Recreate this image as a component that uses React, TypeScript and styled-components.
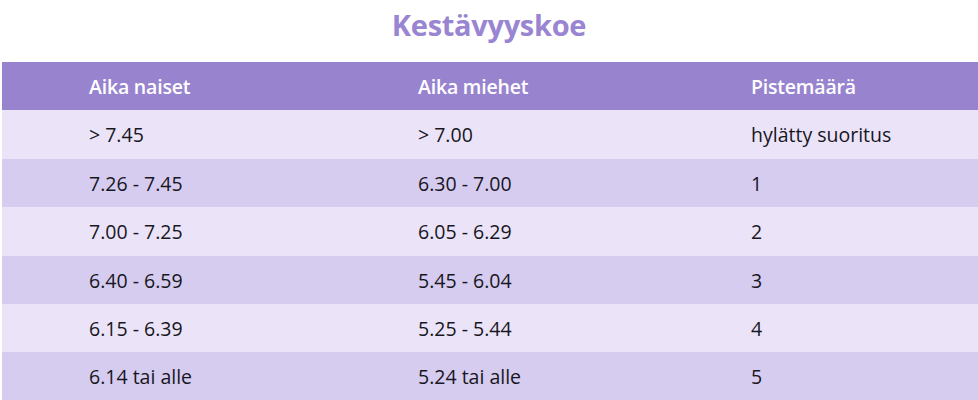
import React from "react";
import styled, { createGlobalStyle } from "styled-components";

const Global = createGlobalStyle`
  html, body { margin: 0; padding: 0; background: #ffffff; }
  body { font-family: "Open Sans", "Noto Sans", sans-serif; }
`;

const Page = styled.div`
  width: 978px;
  height: 400px;
  overflow: hidden;
  display: flex;
  flex-direction: column;
`;

const Title = styled.h1`
  margin: 0;
  height: 62px;
  display: flex;
  align-items: center;
  justify-content: center;
  padding-bottom: 14px;
  box-sizing: border-box;
  font-size: 29px;
  font-weight: 700;
  color: #9985d1;
  letter-spacing: -0.3px;
`;

const Table = styled.div`
  margin-left: 2px;
  display: grid;
  grid-template-columns: 329px 333px 1fr;
`;

const Cell = styled.div<{ $variant: "head" | "light" | "dark"; $h: number }>`
  height: ${(p) => p.$h}px;
  display: flex;
  align-items: center;
  padding-left: 87px;
  font-size: 19.5px;
  font-weight: ${(p) => (p.$variant === "head" ? 600 : 400)};
  color: ${(p) => (p.$variant === "head" ? "#ffffff" : "#18161e")};
  background: ${(p) =>
    p.$variant === "head" ? "#9883cf" : p.$variant === "light" ? "#ebe4f8" : "#d6ccf0"};
  letter-spacing: ${(p) => (p.$variant === "head" ? "-0.2px" : "0")};
  white-space: pre;
`;

const head = ["Aika naiset", "Aika miehet", "Pistemäärä"];
const rows = [
  ["> 7.45", "> 7.00", "hylätty suoritus"],
  ["7.26 - 7.45", "6.30 - 7.00", "1"],
  ["7.00 - 7.25", "6.05 - 6.29", "2"],
  ["6.40 - 6.59", "5.45 - 6.04", "3"],
  ["6.15 - 6.39", "5.25 - 5.44", "4"],
  ["6.14 tai alle", "5.24 tai alle", "5"],
];
const heights = [49, 48, 49, 48, 48, 48];

export default function App() {
  return (
    <Page>
      <Global />
      <Title>Kestävyyskoe</Title>
      <Table>
        {head.map((h) => (
          <Cell key={h} $variant="head" $h={48}>
            {h}
          </Cell>
        ))}
        {rows.map((r, ri) =>
          r.map((c, ci) => (
            <Cell key={`${ri}-${ci}`} $variant={ri % 2 === 0 ? "light" : "dark"} $h={heights[ri]}>
              {c}
            </Cell>
          ))
        )}
      </Table>
    </Page>
  );
}
